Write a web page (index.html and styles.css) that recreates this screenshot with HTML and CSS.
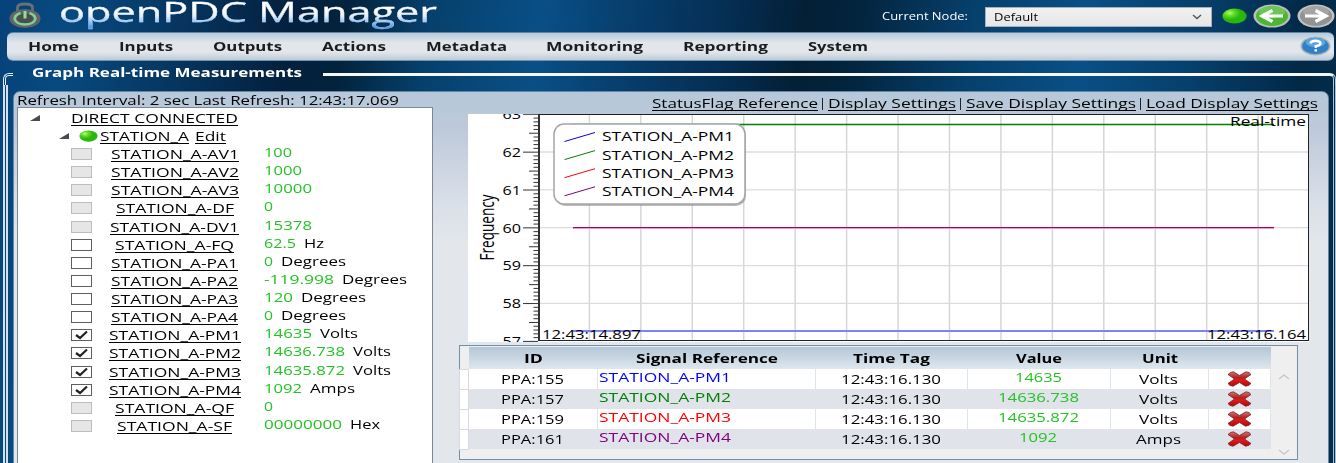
FILE: index.html
```html
<!DOCTYPE html>
<html lang="en">
<head>
<meta charset="utf-8">
<title>openPDC Manager</title>
<link rel="stylesheet" href="styles.css">
</head>
<body>
<div class="app">
  <header class="top">
    <svg class="lock" width="36" height="31" viewBox="0 0 36 31">
      <path d="M10.500 14V9.500q0-3.500 7.500-3.500t7.500 3.500v4.500" fill="none" stroke="#6b7074" stroke-width="2.800"/>
      <ellipse cx="18" cy="20.500" rx="15.500" ry="9.500" fill="#626567"/>
      <ellipse cx="18" cy="20.500" rx="8" ry="5" fill="#4a4f4e"/>
      <path d="M13.500 15q-7 2.500-5.500 7q2.500 4.500 10 4.500t10-4.500q1.500-4.500-5.500-7" fill="none" stroke="#84cf92" stroke-width="2.500"/>
      <path d="M18 13v7.500" stroke="#8be09a" stroke-width="3"/>
    </svg>
    <h1 class="brand"><span class="fit" data-w="378">openPDC Manager</span></h1>
    <div class="node">
      <span class="fit node-label" data-w="86">Current Node:</span>
      <div class="select"><span class="fit" data-w="44">Default</span>
        <svg width="10" height="6" viewBox="0 0 10 6"><path d="M1 1l4 3.500L9 1" fill="none" stroke="#555" stroke-width="1.400"/></svg>
      </div>
      <svg class="led-lg" width="25" height="16" viewBox="0 0 25 16"><use href="#led"/></svg>
      <svg class="nav-btn" width="38" height="24" viewBox="0 0 38 24">
        <ellipse cx="19" cy="12" rx="18.500" ry="11.500" fill="#b9c0bd"/><ellipse cx="19" cy="12" rx="16" ry="10" fill="#4cb530"/><ellipse cx="19" cy="8" rx="13" ry="6" fill="#8cd77a" opacity=".5"/>
        <path d="M30 12H10M19.500 6.500L9 12l10.500 5.500" fill="none" stroke="#fff" stroke-width="3.200"/>
      </svg>
      <svg class="nav-btn" width="38" height="24" viewBox="0 0 38 24">
        <ellipse cx="19" cy="12" rx="18.500" ry="11.500" fill="#c2c3c4"/><ellipse cx="19" cy="12" rx="16" ry="10" fill="#929292"/><ellipse cx="19" cy="8" rx="13" ry="6" fill="#b5b5b5" opacity=".5"/>
        <path d="M8 12h20M18.500 6.500L29 12l-10.500 5.500" fill="none" stroke="#fff" stroke-width="3.200"/>
      </svg>
    </div>
  </header>

  <nav class="menu">
    <span class="fit" data-w="51">Home</span><span class="fit" data-w="54">Inputs</span><span class="fit" data-w="69">Outputs</span><span class="fit" data-w="64">Actions</span><span class="fit" data-w="81">Metadata</span><span class="fit" data-w="97">Monitoring</span><span class="fit" data-w="85">Reporting</span><span class="fit" data-w="60">System</span>
    <svg class="help" width="31" height="20" viewBox="0 0 31 20">
      <ellipse cx="15.500" cy="10" rx="15" ry="9.500" fill="#a9b4bd"/><ellipse cx="15.500" cy="10" rx="13.300" ry="8.300" fill="#2f80c8"/><ellipse cx="15.500" cy="6.500" rx="10" ry="4.500" fill="#8ac0ec" opacity=".55"/>
      <path d="M10.500 7.500Q11 4.800 15.500 4.800T20.500 7.500Q20.500 9.300 15.800 10.200V12M15.800 13.300v2.200" fill="none" stroke="#fff" stroke-width="2.500"/>
    </svg>
  </nav>

  <section class="group">
    <div class="legend-row"><i class="corner"></i><h2><span class="fit" data-w="270">Graph Real-time Measurements</span></h2><i class="rule"></i></div>
    <div class="sides">
      <div class="panel">
        <div class="left">
          <p class="status"><span class="fit" data-w="382">Refresh Interval: 2 sec Last Refresh: 12:43:17.069</span></p>
          <div class="tree">
            <div class="node-row lvl0"><svg width="10" height="6"><path d="M10 0v6H0z" fill="#4a4a4a"/></svg><span class="fit link" data-w="167">DIRECT CONNECTED</span></div>
            <div class="node-row lvl1"><svg width="10" height="6"><path d="M10 0v6H0z" fill="#4a4a4a"/></svg><svg class="led-sm" width="19" height="12" viewBox="0 0 25 16" preserveAspectRatio="none"><use href="#led"/></svg><span class="fit link" data-w="89">STATION_A</span><span class="fit link edit" data-w="31">Edit</span></div>
            <div class="signals" id="signals"></div>
          </div>
        </div>
        <div class="right">
          <div class="links"><span class="fit link" data-w="166">StatusFlag Reference</span><b></b><span class="fit link" data-w="128">Display Settings</span><b></b><span class="fit link" data-w="170">Save Display Settings</span><b></b><span class="fit link" data-w="172">Load Display Settings</span></div>
          <svg class="chart" id="chart" width="841" height="228" viewBox="468 114 841 228"></svg>
          <div class="grid">
            <table>
              <thead><tr><th class="c0"></th><th class="c1"><span class="fit" data-w="19">ID</span></th><th class="c2"><span class="fit" data-w="142">Signal Reference</span></th><th class="c3"><span class="fit" data-w="77">Time Tag</span></th><th class="c4"><span class="fit" data-w="46">Value</span></th><th class="c5"><span class="fit" data-w="36">Unit</span></th><th class="c6"></th></tr></thead>
              <tbody id="rows"></tbody>
            </table>
            <div class="scroll">
              <svg width="12" height="6" viewBox="0 0 12 6"><path d="M1 5l5-4 5 4" fill="none" stroke="#c9c9c9" stroke-width="1.500"/></svg>
              <svg width="12" height="6" viewBox="0 0 12 6"><path d="M1 1l5 4 5-4" fill="none" stroke="#c9c9c9" stroke-width="1.500"/></svg>
            </div>
          </div>
        </div>
      </div>
    </div>
  </section>
</div>
<svg width="0" height="0" class="defs">
  <defs>
    <radialGradient id="ledFill" cx=".3" cy=".3" r=".45"><stop offset="0" stop-color="#b6ff6a"/><stop offset=".45" stop-color="#5fdc24"/><stop offset="1" stop-color="#28b80c"/></radialGradient>
    <linearGradient id="redFill" x1="0" y1="0" x2="0" y2="1"><stop offset="0" stop-color="#c97a7a"/><stop offset=".4" stop-color="#b42222"/><stop offset=".6" stop-color="#e01818"/><stop offset="1" stop-color="#a80c0c"/></linearGradient>
    <symbol id="led" viewBox="0 0 25 16"><ellipse cx="12.500" cy="8" rx="12" ry="7.500" fill="url(#ledFill)"/></symbol>
    <symbol id="cross" viewBox="0 0 25 16"><path d="M1 3.500Q3 1 6.500.8L12.500 4.500 19 .8Q22.500 1 24 3.500L17.500 8 24 12.500Q22 15 18.500 15.200L12.500 11.500 6 15.200Q2.500 15 1 12.500L7.500 8z" fill="url(#redFill)" stroke="#7c2222" stroke-width=".8"/></symbol>
  </defs>
</svg>
<script src="app.js"></script>
</body>
</html>
```

FILE: styles.css
```css
* { box-sizing: border-box; }
html, body { margin: 0; height: 100%; overflow: hidden; }
body { font-family: "Open Sans", "Noto Sans", sans-serif; font-size: 12px; color: #000; }
h1, h2, p { margin: 0; font-weight: 400; }
svg { display: block; flex: none; }
.defs { position: absolute; }
.fit { display: inline-block; white-space: nowrap; transform-origin: 0 50%; flex: none; }
.link { text-decoration: underline; text-decoration-skip-ink: none; text-underline-offset: 2px; text-decoration-thickness: 1px; }

.app {
  height: 463px; display: flex; flex-direction: column;
  background: linear-gradient(97deg, #06427a 0, #074a80 5%, #063b68 11%, #04203e 21%, #03233c 25%, #06406c 31%, #094f86 39%, #063a66 47%, #052f55 52%, #031f35 58%, #03253f 62%, #06406c 70%, #094f86 78%, #06406c 86%, #032846 94%, #052f50 100%);
}

.top { height: 32px; flex: none; display: flex; padding-left: 7px; }
.lock { margin-top: -2px; }
.brand { margin-left: 16px; height: 32px; font-size: 27px; line-height: 24px; }
.brand .fit { height: 32px; background: linear-gradient(#fff 8px, #e6f0fb 16px, #4c9cf0 27px); -webkit-background-clip: text; background-clip: text; color: transparent; -webkit-text-stroke: .3px #e8f1fa80; }
.node { margin-left: auto; display: flex; padding-right: 1px; font-size: 10.5px; }
.node-label { color: #fff; line-height: 33px; font-size: 10px; font-weight: 500; }
.select { width: 227px; height: 20px; margin: 7px 10px 0 17px; padding: 0 9px 0 8px; border: 1px solid #a9b0b8; background: linear-gradient(#f1f1f1, #e6e6e6); display: flex; align-items: center; }
.select svg { margin-left: auto; }
.led-lg { margin-top: 8px; }
.nav-btn { margin: 4px 0 0 6px; }

.menu { flex: none; height: 29px; width: 1327px; margin-left: 7px; border-radius: 6px; padding: 0 3px 2px 21px; display: flex; align-items: center; gap: 39.9px; font-weight: 700; color: #1c1c1c; background: linear-gradient(#b7c9d8, #e0e6ec 35%, #e3e6eb 70%, #bccbd8); border-top: 1px solid #5f86a8; border-bottom: 1px solid #7292ad; }
.menu .fit { padding-top: 1px; }
.help { margin: 1px 0 0 auto; }

.group { flex: 1; display: flex; flex-direction: column; min-height: 0; margin-left: 3px; }
.legend-row { height: 24px; flex: none; display: flex; }
.legend-row h2 { margin: 3px 21px 0 19px; font-size: 12px; font-weight: 700; line-height: 18px; color: #fff; }
.corner { width: 10px; height: 12px; margin-top: 12px; border: 3px double #e4edf5; border-right: 0; border-bottom: 0; border-top-left-radius: 6px; }
.rule { flex: 1; height: 12px; margin-top: 12px; border-top: 3px solid #f4f8fb; border-right: 3px double #b9cbdc; border-top-right-radius: 6px; }
.sides { flex: 1; min-height: 0; border-left: 5px double #d4e0ec; border-right: 3px double #a9bfd3; padding: 6px 4px 0 5px; }
.panel { height: 380px; border-radius: 7px 7px 0 0; border: 1px solid #6686a3; background: linear-gradient(#b5c8d9, #bec9da 10%, #dae0e9 30%, #e3e6eb 40%); display: flex; padding-left: 3px; }
.left { width: 416px; flex: none; }
.status { height: 15px; line-height: 17px; }
.tree { height: 365px; background: #fff; border: 1px solid #7b8794; }
.node-row { display: flex; align-items: center; height: 18px; }
.node-row .link { line-height: 18px; padding-top: 1px; }
.lvl0 { padding-left: 12px; margin-top: 1px; }
.lvl0 .link { margin-left: 31px; }
.lvl1 { padding-left: 41px; }
.led-sm { margin: 0 2px 0 10px; }
.edit { margin-left: 6px; }
.sig { height: 18.13px; display: grid; grid-template-columns: 34px 138px 1fr; padding-left: 53px; line-height: 18px; }
.box { width: 21px; height: 12px; margin-top: 3px; border: 1px solid #5f5f5f; background: #fff; }
.box.off { border-color: #bdbdbd; background: #e6e6e6; }
.name { display: flex; justify-content: center; padding: 1px 0 0 1px; }
.val { display: flex; gap: 8px; margin-left: 21px; margin-top: -1px; }
.green { color: #22c322; }

.right { flex: 1; display: flex; flex-direction: column; min-width: 0; }
.links { display: flex; flex: none; justify-content: flex-end; height: 22px; padding: 3px 10px 0 0; line-height: 17px; }
.links b { width: 1px; height: 12px; margin: 3px 5px 0 4px; background: #222; }
.chart { margin-left: 35px; background: #fff; }
.chart text { font-size: 12px; }
.grid { flex: none; width: 839px; height: 115px; margin: 3px 0 0 26px; border: 1px solid #6d8fae; background: #efefef; display: flex; padding-top: 1px; }
table { border-collapse: collapse; table-layout: fixed; width: 811px; height: 102px; margin-left: -1px; }
th, td { padding: 0; text-align: center; }
th { height: 22px; background: linear-gradient(#b3c6d7, #dfe7ee); }
th:first-child { background: #efefef; }
.c0 { width: 9px; } .c1 { width: 129px; } .c2 { width: 218px; } .c3 { width: 152px; } .c4 { width: 143px; } .c5 { width: 98px; } .c6 { width: 62px; }
td { height: 20px; line-height: 18px; background: #fff; border-right: 1px solid #e0e4e9; vertical-align: middle; }
td .fit { position: relative; top: 1px; left: -1px; vertical-align: top; }
tr:nth-child(even) td { background: #e0e4ea; }
td:first-child { background: #fff !important; border: 1px solid #d9d9d9; }
.ref { text-align: left; padding-left: 2px; }
td.ref .fit, td.num .fit { top: -1px; }
td svg { margin: 0 auto; }
.scroll { flex: 1; display: flex; flex-direction: column; justify-content: space-between; align-items: center; padding: 27px 0 4px; }
```

FILE: app.js
```js
const signals = [
  ['AV1', 'off', 128, '100', 28], ['AV2', 'off', 128, '1000', 38], ['AV3', 'off', 128, '10000', 48],
  ['DF', 'off', 118, '0', 9], ['DV1', 'off', 129, '15378', 48], ['FQ', '', 119, '62.5', 32, 'Hz', 20],
  ['PA1', '', 127, '0', 9, 'Degrees', 65], ['PA2', '', 127, '-119.998', 70, 'Degrees', 65],
  ['PA3', '', 127, '120', 29, 'Degrees', 65], ['PA4', '', 127, '0', 9, 'Degrees', 65],
  ['PM1', 'on', 132, '14635', 48, 'Volts', 38], ['PM2', 'on', 132, '14636.738', 81, 'Volts', 38],
  ['PM3', 'on', 132, '14635.872', 81, 'Volts', 38], ['PM4', 'on', 132, '1092', 38, 'Amps', 45],
  ['QF', 'off', 119, '0', 9], ['SF', 'off', 115, '00000000', 78, 'Hex', 30]
];
const fit = (text, w, cls = '') => `<span class="fit ${cls}" data-w="${w}">${text}</span>`;
const tick = '<svg width="19" height="10"><path d="M4 5l4 3 7-6.500" fill="none" stroke="#222" stroke-width="2.2"/></svg>';
document.getElementById('signals').innerHTML = signals.map(([n, state, w, v, vw, u, uw]) =>
  `<div class="sig"><div class="box ${state}">${state === 'on' ? tick : ''}</div>` +
  `<div class="name">${fit('STATION_A-' + n, w, 'link')}</div>` +
  `<div class="val">${fit(v, vw, 'green')}${u ? fit(u, uw) : ''}</div></div>`).join('');

const rows = [
  [155, 1, '#0000ff', '14635', 47, 'Volts', 39], [157, 2, '#008000', '14636.738', 81, 'Volts', 39],
  [159, 3, '#ff0000', '14635.872', 81, 'Volts', 39], [161, 4, '#800080', '1092', 38, 'Amps', 45]
];
document.getElementById('rows').innerHTML = rows.map(([id, n, color, v, vw, u, uw]) =>
  `<tr><td></td><td>${fit('PPA:' + id, 63)}</td><td class="ref" style="color:${color}">${fit('STATION_A-PM' + n, 132)}</td>` +
  `<td>${fit('12:43:16.130', 100)}</td><td class="num">${fit(v, vw, 'green')}</td><td>${fit(u, uw)}</td>` +
  `<td><svg width="25" height="16"><use href="#cross"/></svg></td></tr>`).join('');

const line = (x1, y1, x2, y2, c, w = 1) => `<path d="M${x1} ${y1}L${x2} ${y2}" stroke="${c}" stroke-width="${w}"/>`;
const label = (x, y, w, t) => `<text x="${x}" y="${y}" textLength="${w}" lengthAdjust="spacingAndGlyphs">${t}</text>`;
let s = '';
for (let i = 0; i < 14; i++) { const x = 589.4 + i * 51.44; s += line(x, 115, x, 340, '#d6d6d6', 1.5); }
for (let i = 0; i < 5; i++) { const y = 152 + i * 37.85; s += line(539, y, 1308, y, '#dcdcdc', 1.3); }
for (let i = 0; i <= 60; i++) {
  const y = 114.3 + i * 3.785;
  s += line(i % 10 === 0 ? 523 : i % 5 === 0 ? 529 : 533.5, y, 538, y, '#333');
}
for (let i = 0; i < 7; i++) s += label(502.5, 119 + i * 37.85, 18.5, 63 - i);
s += line(573, 331, 1274, 331, '#8080ff', 2) + line(573, 124.5, 1274, 124.5, '#008000', 1.3);
s += line(573, 227.5, 1274, 227.5, '#a80068', 1) + line(573, 228.5, 1274, 228.5, '#d9a0d0', 1);
s += '<rect x="539" y="114.500" width="769.500" height="226" fill="none" stroke="#222"/>' + line(539, 114, 539, 341, '#222', 1.7);
s += '<text transform="translate(494 260.500) rotate(-90)" textLength="66" lengthAdjust="spacingAndGlyphs" style="font-size:20.5px">Frequency</text>';
s += label(542, 339, 99, '12:43:14.897') + label(1207, 339, 99, '12:43:16.164') + label(1230, 126, 76, 'Real-time');
s += '<rect x="555" y="125" width="191" height="81" rx="10" fill="#777" opacity=".5"/><rect x="554" y="124" width="191" height="80" rx="10" fill="#fff" stroke="#a5a5a5" stroke-width="1.500"/>';
['#0000ff', '#008000', '#ff0000', '#800080'].forEach((c, i) => {
  s += line(564.5, 141.5 + i * 18.1, 595, 132.5 + i * 18.1, c) + label(602, 141.3 + i * 18.2, 132, 'STATION_A-PM' + (i + 1));
});
document.getElementById('chart').innerHTML = s;

/* Stretch each label horizontally to its data-w width, keeping the flow in step. */
for (const el of document.querySelectorAll('.fit')) {
  const natural = el.getBoundingClientRect().width, target = Number(el.dataset.w);
  el.style.transform = `scaleX(${target / natural})`;
  el.style.marginRight = `${target - natural}px`;
}
```
